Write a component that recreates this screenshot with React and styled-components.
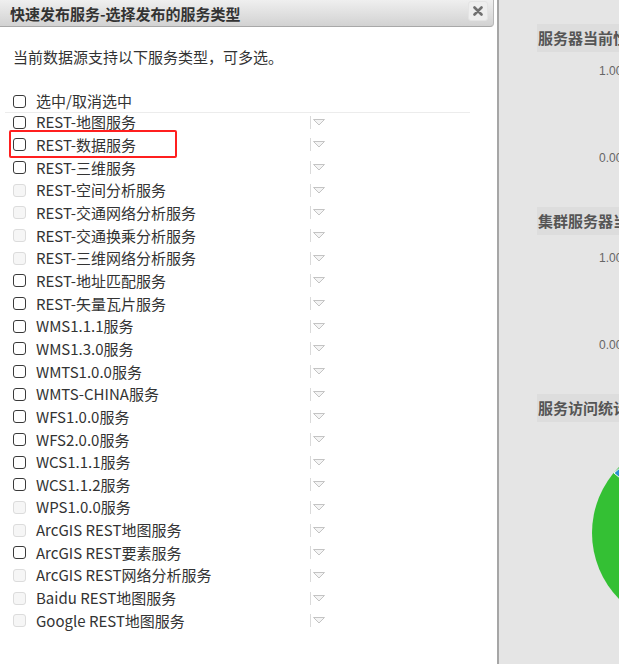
import styled, { createGlobalStyle } from "styled-components";

const GlobalStyle = createGlobalStyle`
    html, body {
        margin: 0;
        padding: 0;
        overflow: hidden;
        background: #fff;
    }
    body {
        font-family: "Noto Sans CJK SC", "Noto Sans", sans-serif;
    }
`;

const Page = styled.div`
    display: flex;
    width: 619px;
    height: 664px;
    overflow: hidden;
`;

const Dialog = styled.div`
    flex: 0 0 497px;
    background: #fff;
    display: flex;
    flex-direction: column;
`;

const DialogHeader = styled.div`
    height: 26px;
    margin-right: 3px;
    display: flex;
    align-items: center;
    justify-content: space-between;
    padding: 0 5px 0 10px;
    background: linear-gradient(#efefef, #d2d2d2);
    border-bottom: 1px solid #a8a8a8;
    border-right: 1px solid #b8b8b8;
    border-bottom-right-radius: 4px;
`;

const DialogTitle = styled.div`
    font-size: 15px;
    font-weight: bold;
    color: #333;
    white-space: nowrap;
`;

const CloseButton = styled.div`
    width: 18px;
    height: 18px;
    margin-top: -4px;
    display: flex;
    align-items: center;
    justify-content: center;
    background: #eeeeee;
    border: 1px solid #e4e4e4;
    border-radius: 3px;
`;

const DialogBody = styled.div`
    padding: 20px 0 0 5px;
`;

const Intro = styled.p`
    margin: 0 0 23px 8px;
    font-size: 15px;
    line-height: 20px;
    color: #333;
`;

const Row = styled.div`
    display: flex;
    align-items: center;
    width: 457px;
    height: ${props => props.$h || "22.67px"};
    padding-left: 8px;
    border-bottom: ${props => props.$underline ? "1px solid #ececec" : "none"};
`;

const Check = styled.span`
    flex: 0 0 13px;
    height: 13px;
    box-sizing: border-box;
    margin-right: 10px;
    border-radius: 3px;
    border: 1px solid ${props => props.$disabled ? "#dcdcdc" : "#3a3a3a"};
    background: ${props => props.$disabled ? "#f6f6f6" : "#fff"};
`;

const Label = styled.span`
    flex: 0 0 274px;
    font-size: 15px;
    line-height: 20px;
    color: #333;
    white-space: nowrap;
`;

const Divider = styled.span`
    width: 1px;
    height: 13px;
    background: #dadada;
`;

const Caret = styled.svg`
    margin-left: 2px;
`;

const List = styled.div`
    position: relative;
    margin-top: -2px;
`;

const Highlight = styled.div`
    position: absolute;
    top: 19px;
    left: 4px;
    width: 168px;
    height: 28px;
    box-sizing: border-box;
    border: 2.5px solid #ff1f1f;
    border-radius: 2px;
`;

const Panel = styled.div`
    flex: 1;
    min-width: 0;
    overflow: hidden;
    background: #e5e5e5;
    border-left: 2px solid #a6a6a6;
    padding: 24px 0 0 38px;
`;

const SectionTitle = styled.div`
    height: 28px;
    line-height: 28px;
    padding-left: 1px;
    background: #dddddd;
    font-size: 15px;
    font-weight: bold;
    color: #555;
    white-space: nowrap;
`;

const ChartArea = styled.div`
    display: flex;
    flex-direction: column;
    gap: 73px;
    padding: ${props => props.$top}px 0 42px 62px;
`;

const Tick = styled.span`
    font-family: "Liberation Sans", sans-serif;
    font-size: 12px;
    line-height: 14px;
    color: #666;
`;

const Pie = styled.svg`
    display: block;
    flex-shrink: 0;
    margin: 17px 0 0 55px;
`;

const services = [
    ["REST-地图服务", false],
    ["REST-数据服务", false],
    ["REST-三维服务", false],
    ["REST-空间分析服务", true],
    ["REST-交通网络分析服务", true],
    ["REST-交通换乘分析服务", true],
    ["REST-三维网络分析服务", true],
    ["REST-地址匹配服务", false],
    ["REST-矢量瓦片服务", false],
    ["WMS1.1.1服务", false],
    ["WMS1.3.0服务", false],
    ["WMTS1.0.0服务", false],
    ["WMTS-CHINA服务", false],
    ["WFS1.0.0服务", false],
    ["WFS2.0.0服务", false],
    ["WCS1.1.1服务", false],
    ["WCS1.1.2服务", false],
    ["WPS1.0.0服务", true],
    ["ArcGIS REST地图服务", true],
    ["ArcGIS REST要素服务", false],
    ["ArcGIS REST网络分析服务", true],
    ["Baidu REST地图服务", true],
    ["Google REST地图服务", true],
];

function CaretIcon() {
    return (
        <Caret width="12" height="7" viewBox="0 0 12 7">
            <path d="M0.5 0.5 H11.5 L6 6 Z" fill="#f4f4f4" stroke="#c4c4c4" strokeWidth="1" />
        </Caret>
    );
}

function ServiceRow({ name, disabled }) {
    return (
        <Row>
            <Check $disabled={disabled} />
            <Label>{name}</Label>
            <Divider />
            <CaretIcon />
        </Row>
    );
}

function App() {
    return (
        <Page>
            <GlobalStyle />
            <Dialog>
                <DialogHeader>
                    <DialogTitle>快速发布服务-选择发布的服务类型</DialogTitle>
                    <CloseButton>
                        <svg width="10" height="10" viewBox="0 0 10 10">
                            <path d="M1.5 1.5 L8.5 8.5 M8.5 1.5 L1.5 8.5" stroke="#707070" strokeWidth="2.6" strokeLinecap="round" />
                        </svg>
                    </CloseButton>
                </DialogHeader>
                <DialogBody>
                    <Intro>当前数据源支持以下服务类型，可多选。</Intro>
                    <Row $h="22px" $underline>
                        <Check />
                        <Label>选中/取消选中</Label>
                    </Row>
                    <List>
                        {services.map(([name, disabled]) => (
                            <ServiceRow key={name} name={name} disabled={disabled} />
                        ))}
                        <Highlight />
                    </List>
                </DialogBody>
            </Dialog>
            <Panel>
                <SectionTitle>服务器当前性能监控</SectionTitle>
                <ChartArea $top={12}>
                    <Tick>1.00</Tick>
                    <Tick>0.00</Tick>
                </ChartArea>
                <SectionTitle>集群服务器当前性能监控</SectionTitle>
                <ChartArea $top={16}>
                    <Tick>1.00</Tick>
                    <Tick>0.00</Tick>
                </ChartArea>
                <SectionTitle>服务访问统计</SectionTitle>
                <Pie width="188" height="188" viewBox="0 0 188 188">
                    <circle cx="94" cy="94" r="94" fill="#34c034" />
                    <path d="M94 94 L22 34 L29 28 Z" fill="#2b8fd3" stroke="#fff" strokeWidth="1" />
                </Pie>
            </Panel>
        </Page>
    );
}

export default App;
